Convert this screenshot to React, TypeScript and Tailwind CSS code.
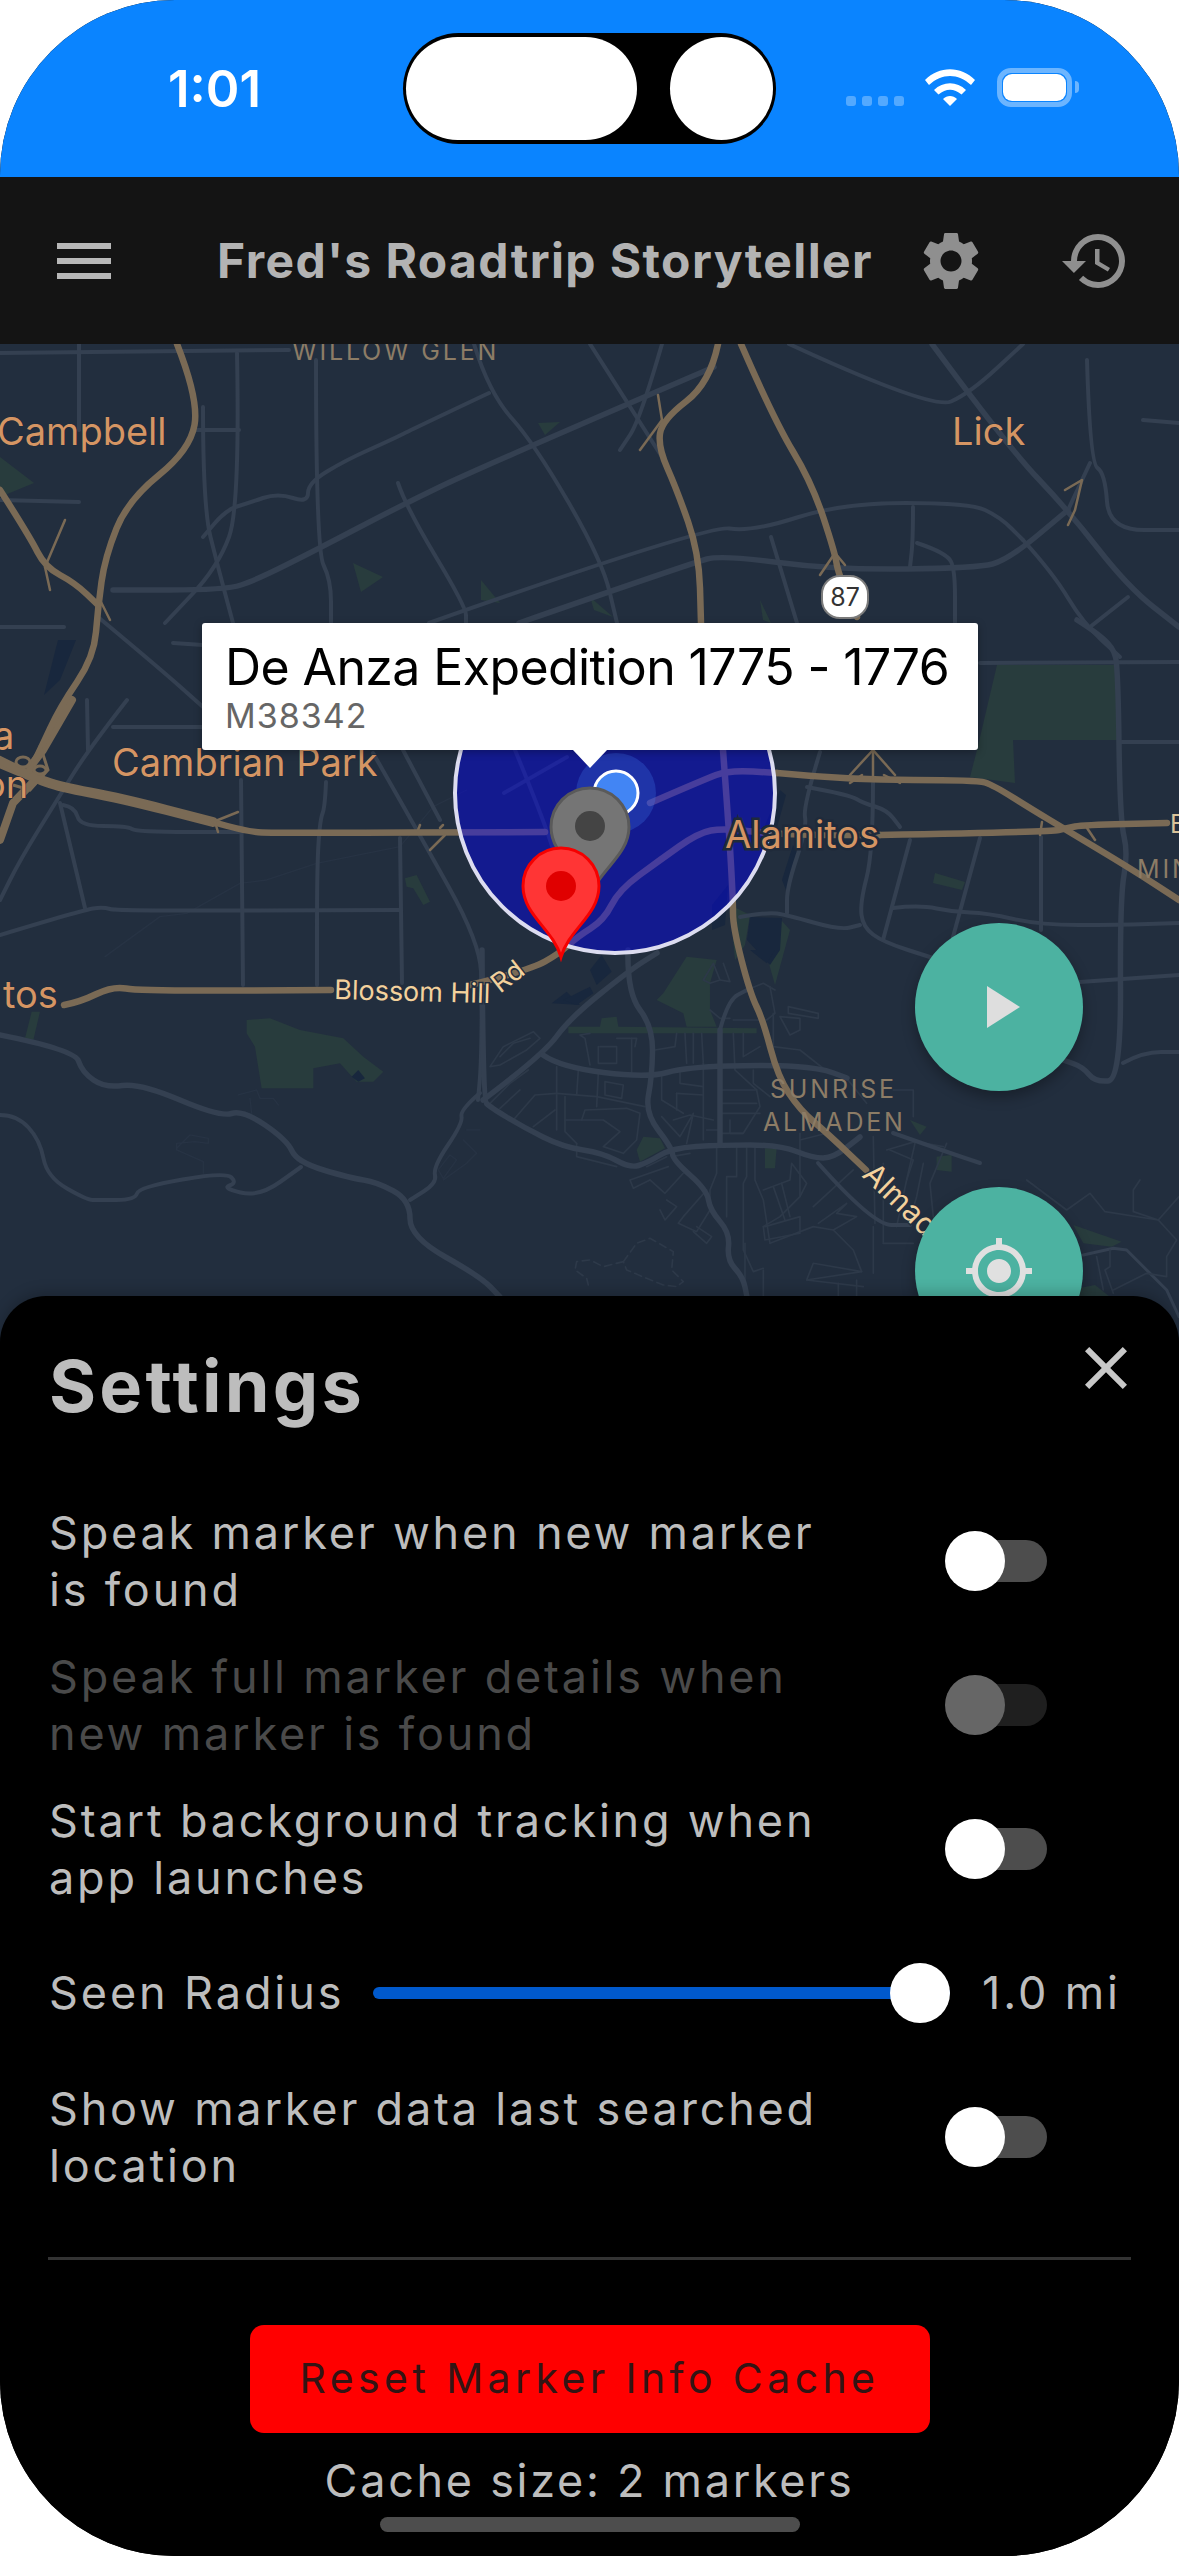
import React from "react";
import { MdMenu, MdSettings, MdHistory, MdClose, MdPlayArrow, MdGpsFixed } from "react-icons/md";

const HWY = "#7a6a55";
const ART = "#344051";
const MIN = "#2d3949";
const PARK = "#283c3d";

function smoothPath(p: string) {
  const pts = p.trim().split(/\s+/).map((s) => s.split(",").map(Number));
  let d = `M${pts[0][0]} ${pts[0][1]}`;
  for (let i = 1; i < pts.length - 1; i++) {
    const mx = (pts[i][0] + pts[i + 1][0]) / 2;
    const my = (pts[i][1] + pts[i + 1][1]) / 2;
    d += `Q${pts[i][0]} ${pts[i][1]} ${mx} ${my}`;
  }
  const last = pts[pts.length - 1];
  return d + `L${last[0]} ${last[1]}`;
}

function Lines({ items, color, width, dash, smooth }: { items: string[]; color: string; width: number; dash?: string; smooth?: boolean }) {
  return (
    <g fill="none" stroke={color} strokeWidth={width} strokeLinejoin="round" strokeLinecap="round" strokeDasharray={dash}>
      {items.map((p, i) => (smooth ? <path key={i} d={smoothPath(p)} /> : <polyline key={i} points={p} />))}
    </g>
  );
}

function Polys({ items, color }: { items: string[]; color: string }) {
  return (
    <g fill={color}>
      {items.map((p, i) => (
        <polygon key={i} points={p} />
      ))}
    </g>
  );
}

const parks = [
  "997,665 1117,665 1117,740 1013,740 1015,783 970,777 977,750",
  "935,873 965,882 962,890 933,883",
  "538,423 560,422 545,435",
  "353,563 383,577 361,592",
  "481,580 500,603 481,600",
  "590,597 613,617 594,610",
  "760,600 771,623 763,620",
  "0,457 34,483 0,497",
  "730,905 750,915 745,945 735,960",
  "781,920 790,930 775,985 768,960",
  "1070,1290 1095,1285 1120,1305 1080,1300",
];
const water = [
  "747,940 750,917 782,918 780,950 770,965",
  "58,640 76,640 60,680 44,695",
  "763,830 780,790 786,795 772,845",
  "782,880 793,845 797,852 788,895",
  "712,905 728,885 725,925 712,930",
];
const highways = [
  "741,344 774,420 812,483 835,553 838,573 857,617",
  "723,750 729,830 733,900 733,927 750,993 763,1020 778,1077 800,1110 827,1133 866,1170",
  "718,344 710,383 662,420 658,447 677,490 699,553 701,623",
  "177,344 199,400 190,450 128,500 105,557 98,607 94,657 60,707 40,750 30,770",
  "0,490 30,537 45,567 75,583 98,605",
  "777,773 850,780 977,780 993,785 1033,810 1063,828 1133,870 1179,900",
  "880,835 1050,832 1067,828 1083,825 1167,823",
  "213,822 247,832 277,833 545,832",
  "650,803 703,780 729,770 777,773",
  "64,1005 80,1002 113,986 139,991 331,990",
  "470,985 530,970 560,953 577,937 604,920 619,890 660,860 698,833 724,828 780,835 880,835",
];
const majorArterials = [
  "519,623 692,563 722,555 835,570 977,568 1008,560 1068,510",
  "714,367 481,467 398,507 316,550 256,580 226,590 113,590",
  "0,1035 75,1050 82,1072 105,1088 140,1083 220,1117 243,1110 287,1140 297,1162 350,1178 377,1182 410,1200 410,1237 481,1277 500,1297",
  "482,950 483,1100 490,1107 523,1127 563,1147 603,1153 630,1168 647,1163 672,1148 720,1145 780,1145 813,1158 833,1158 860,1137",
  "483,1100 543,1055 570,1018 630,970 657,953",
  "543,1055 560,1067 647,1078 687,1067 770,1065 820,1068 847,1078",
  "628,950 627,993 653,1027 652,1077 645,1113 672,1148 673,1160 707,1190 710,1210 730,1233 727,1260 743,1277 747,1297",
  "720,1030 720,1145",
  "932,344 1008,447 1068,510 1128,587 1179,627",
  "1077,620 1093,630 1113,647 1118,667 1120,820 1128,853 1120,897 1121,1080 1095,1082 1083,1067 1063,1060",
];
const arterials = [
  "0,353 289,350",
  "474,344 489,393 534,443 602,560 617,623",
  "398,483 406,507 466,607 466,623",
  "429,623 707,525 752,532 842,503 970,503 1000,517 1023,540",
  "489,393 417,427 391,440 346,460 308,483 308,503 278,493 248,503 226,510 203,537",
  "79,344 79,430",
  "203,407 203,507 218,567 233,623",
  "237,353 240,507 218,567 165,623",
  "195,430 239,430",
  "0,500 79,502",
  "316,360 316,550 331,580 331,623",
  "98,617 158,667 203,707",
  "0,627 64,627",
  "173,643 203,645",
  "113,727 203,727",
  "127,700 88,750 57,800 20,860 0,900",
  "87,700 88,750",
  "60,803 85,908",
  "63,805 75,807 80,826 127,826 137,832 240,832",
  "0,935 83,910 103,907 117,911 400,910",
  "241,780 243,985",
  "326,782 325,807 320,820 317,867 317,985",
  "400,838 402,983",
  "373,753 417,830 480,943 482,1000 481,1067 478,1100",
  "403,750 440,820",
  "0,1115 17,1115 40,1140 47,1177 87,1200 98,1200 135,1200 139,1187 226,1172 237,1183 222,1188 259,1197 301,1167",
  "480,1093 460,1110 463,1123 433,1167 437,1183 410,1200",
  "720,1030 728,1000 747,990",
  "818,1163 873,1225 910,1225",
  "893,1133 947,1152 980,1163",
  "807,787 850,795 863,803 887,810 900,827",
  "873,783 873,853 860,903 863,927 883,942 933,958",
  "740,917 767,912 787,915 840,930 860,925",
  "910,840 883,940",
  "980,838 953,937",
  "893,908 920,905 953,912 987,913 1040,925 1117,925 1179,923",
  "1041,837 1041,930",
  "980,663 1179,662",
  "1120,742 1179,742",
  "1080,982 1179,975",
  "1123,1063 1143,1052 1179,1052",
  "820,752 803,807 807,827 787,887 787,913",
  "789,344 932,410 970,393 1023,344",
  "1087,360 1090,463 1105,473 1109,530 1179,530",
  "1143,420 1179,423",
  "913,507 913,540 910,567",
  "917,543 947,553 955,570 955,623",
  "1023,540 1053,573 1083,623 1120,657",
  "1128,597 1090,627",
  "771,537 797,623",
  "662,344 640,420 620,450",
  "515,750 541,813 560,870",
  "504,793 567,757",
  "590,344 662,457",
  "1090,463 1068,510",
];
const minors11 = [
  "30,350 70,290 160,245 180,265 140,300 60,345 30,350", "60,320 100,280 150,265",
  "230,350 230,540", "295,360 290,435", "255,440 255,545 290,580", "350,470 355,370",
  "375,395 430,405 425,445 375,435 375,395", "455,265 455,370", "360,290 410,290 410,340 355,340 355,290",
  "410,265 470,265 465,290", "330,250 300,255 315,265 330,345", "30,460 90,400 145,360", "60,475 120,420",
  "100,510 165,435 230,430", "160,530 225,480", "230,430 350,440 495,470", "305,510 315,480 440,475 480,490 470,570 430,610",
  "255,510 370,510 420,545 370,590 430,610", "290,580 290,620 410,650", "525,300 585,290 590,250", "615,250 620,340",
  "640,250 640,340", "665,250 670,340", "545,380 545,450 610,490", "600,365 600,400 670,410", "590,430 670,435",
  "590,430 590,480", "670,340 670,570", "545,500 600,560 640,490 620,580", "580,510 630,495 700,510", "680,540 720,540",
  "720,420 830,420 840,470 790,550 720,550", "725,460 830,460", "725,490 840,490", "750,510 750,550 790,550",
  "820,360 820,400 870,440", "760,250 765,360 830,420", "790,250 790,320 840,290", "900,200 960,205 960,240 930,255 900,200",
  "925,170 1015,190 1015,205 925,190 925,170", "880,190 880,290 960,300 1030,355 1100,385", "960,550 960,740 900,800 850,830",
  "1040,550 960,570", "1100,385 1160,460", "1240,420 1300,420 1300,500", "1180,560 1185,820", "1210,640 1210,880",
  "1230,600 1300,630 1280,690 1250,830", "1305,580 1280,690", "1330,640 1310,740 1290,810", "1400,580 1350,700 1360,800",
  "1220,600 1305,575 1390,590", "575,620 630,610", "610,670 555,730 510,690", "565,650 450,690 460,715 510,690", "500,650 560,620",
  "680,720 610,800 595,820 650,845 690,780", "650,830 695,860 680,880 640,845", "560,750 590,770 555,810 540,780",
  "710,590 710,670 690,720 690,780", "770,590 770,680 740,680 740,800", "800,590 800,680 790,700 790,900 820,965 850,955",
  "825,590 825,690 850,750 870,880", "850,720 930,690 935,640 980,700 960,740", "880,710 915,810", "905,700 930,800",
  "855,830 960,800 960,850 855,870 850,830", "870,880 1000,830 1060,840 1120,900 1145,965", "1060,840 1130,800 1070,790 1100,760 1015,820",
  "1000,770 1120,660", "1000,940 1145,965 980,990 1000,940", "980,990 1150,1010", "1180,830 1180,970", "1210,880 1300,880",
  "1130,990 1130,1040", "1075,1000 1075,1040", "850,960 850,1040", "795,880 795,1040",
  "690,100 720,90 700,40 670,90 690,100", "720,90 750,95 730,40", "690,180 720,205 750,205",
  "885,120 850,100 800,120", "870,110 885,190 860,210 760,210",
];

function MapDrawing() {
  return (
    <svg className="absolute inset-0 block" width={1179} height={1012} viewBox="0 344 1179 1012">
      <rect x={0} y={344} width={1179} height={1012} fill="#222e3e" />
      <Polys items={parks} color={PARK} />
      <Polys items={water} color="#18273d" />
      <g transform="translate(480 950) scale(0.3333)">
        <Polys
          items={[
            "550,130 620,20 710,30 690,100 690,180 710,230 620,230 610,190 530,150",
            "265,230 360,230 365,205 410,200 415,230 830,235 830,250 265,250",
            "470,600 490,560 540,565 555,595 480,635",
            "855,595 890,595 885,655 855,655",
            "1290,510 1340,530 1320,555",
            "1370,620 1415,615 1415,665 1370,660",
          ]}
          color={PARK}
        />
        <Polys
          items={["215,160 260,125 300,165", "330,60 365,15 395,65 350,105", "250,150 330,110 340,130 290,165", "810,0 885,0 860,40"]}
          color="#18273d"
        />
        <Lines items={minors11} color={MIN} width={5} />
        <Lines
          items={["430,935 470,880 510,865 580,905 575,960 610,995 590,1010 550,1005 500,985 440,960 430,935", "430,935 370,950 330,930 290,935 285,960 320,985 325,1005"]}
          color={MIN}
          width={5}
          dash="22 14"
        />
      </g>
      <g transform="translate(0 700) scale(0.3333)">
        <Polys
          items={[
            "740,960 810,955 900,990 1030,1015 1090,1070 1150,1115 1120,1145 1070,1145 1020,1090 940,1105 940,1165 785,1165 765,1040 740,1000",
            "1215,535 1250,525 1290,605 1270,615 1240,565 1220,560",
            "95,935 120,935 100,1020 75,1015",
          ]}
          color={PARK}
        />
        <Polys items={["1055,1130 1075,1110 1095,1135 1075,1145"]} color="#18273d" />
        <Lines
          items={[
            "715,1185 770,1170 780,1195 820,1195 835,1215",
            "750,1195 755,1240",
            "530,1345 570,1305 625,1315 625,1330 585,1325 530,1330 530,1350 610,1385 610,1420",
            "1315,1410 1350,1365 1370,1380 1330,1435 1315,1410",
            "1400,1290 1440,1290",
            "1390,1320 1430,1360 1400,1390 1330,1440",
            "315,770 480,650 560,640 720,550 800,540 950,490 1200,440 1300,320 1400,270",
          ]}
          color="#273344"
          width={4}
        />
      </g>
      <g transform="translate(900 1180) scale(0.3333)">
        <Polys items={["520,135 665,185 635,200 550,190"]} color={PARK} />
        <Lines items={["550,225 640,205 680,210 740,270 800,330 837,410"]} color={ART} width={9} />
        <Lines
          items={["380,0 500,90 570,40 615,95 775,120 700,95 700,30 720,0", "775,120 830,180 800,230 800,290 740,280 640,330", "775,120 837,50", "590,230 610,330", "630,210 630,260 615,270 640,340"]}
          color={MIN}
          width={5}
        />
      </g>
      <Lines items={arterials} color={ART} width={4} smooth />
      <Lines items={majorArterials} color={ART} width={5.5} smooth />
      <Lines items={["0,763 33,777 60,787 120,798 213,822"]} color={HWY} width={10} smooth />
      <Lines items={["0,840 13,803 37,778", "72,700 43,750 30,767", "0,760 40,780"]} color={HWY} width={8} />
      <Lines items={highways} color={HWY} width={6.5} smooth />
      <Lines
        items={[
          "45,567 65,520", "45,567 50,590", "100,600 110,620", "662,420 658,395", "662,420 640,450",
          "873,750 850,775", "873,750 895,775", "873,750 873,780", "862,775 850,783", "884,775 900,783",
          "213,822 238,812", "215,822 218,832", "420,825 418,830", "440,828 443,825", "445,835 430,850",
          "1042,822 1040,835", "1085,825 1095,840", "1048,820 1062,826", "835,553 845,565", "835,553 820,575",
          "1065,490 1082,480 1075,510 1068,525",
        ]}
        color={HWY}
        width={2.5}
      />
      <g fill="none" stroke={HWY} strokeWidth={3}>
        <ellipse cx={23} cy={762} rx={7} ry={5} />
        <ellipse cx={40} cy={770} rx={6} ry={4} />
        <polyline points="13,785 30,790 48,770 40,745" />
      </g>
      <circle cx={615} cy={793} r={160} fill="#0000ff" fillOpacity={0.42} stroke="#dcdcf0" strokeWidth={4} />
      <g fontFamily="Inter, sans-serif">
        <g fill="#d59563" fontSize={38} stroke="#1f2a3a" strokeWidth={1} paintOrder="stroke">
          <text x={-3} y={445}>Campbell</text>
          <text x={952} y={445}>Lick</text>
          <text x={112} y={776}>Cambrian Park</text>
          <text x={-7} y={749}>a</text>
          <text x={-17} y={798}>on</text>
          <text x={725} y={848} stroke="#1f2a3a" strokeWidth={5}>Alamitos</text>
          <text x={3} y={1008}>tos</text>
        </g>
        <g fill="#8c7c66" fontSize={25} letterSpacing={2.8}>
          <text x={292} y={360}>WILLOW GLEN</text>
          <text x={770} y={1098}>SUNRISE</text>
          <text x={763} y={1131}>ALMADEN</text>
          <text x={1137} y={878}>MIN</text>
        </g>
        <text x={1170} y={833} fill="#d9c39a" fontSize={25}>E</text>
        <g fill="#f3d19c" fontSize={27} stroke="#222e3e" strokeWidth={3} paintOrder="stroke">
          <text x={334} y={999} transform="rotate(1.5 334 999)">Blossom Hill</text>
          <text x={500} y={994} transform="rotate(-38 500 994)">Rd</text>
          <text x={861} y={1176} transform="rotate(44 861 1176)" fontSize={30}>Almad</text>
        </g>
      </g>
      <rect x={822} y={576} width={46} height={42} rx={18} fill="#fff" stroke="#7c7c7c" strokeWidth={2} />
      <text x={845} y={606} textAnchor="middle" fontFamily="Inter, sans-serif" fontSize={25} fill="#333">87</text>
      <circle cx={616} cy={793} r={40} fill="#4285f4" fillOpacity={0.25} />
      <circle cx={616} cy={793} r={22} fill="#4285f4" stroke="#fff" strokeWidth={3} />
      <path d="M590 898 C582 870 551 856 551 827 A39 39 0 0 1 629 827 C629 856 598 870 590 898 Z" fill="#757575" stroke="#5a5a5a" strokeWidth={3} />
      <circle cx={590} cy={826} r={15} fill="#444" />
      <path d="M561 957 C553 929 523 915 523 886 A38 38 0 0 1 599 886 C599 915 569 929 561 957 Z" fill="#ff3535" stroke="#f50000" strokeWidth={3} />
      <circle cx={561} cy={886} r={15} fill="#e00000" />
    </svg>
  );
}

function Toggle({ disabled }: { disabled?: boolean }) {
  return (
    <div className="relative w-[102px] h-[60px] shrink-0">
      <div className={`absolute right-0 top-[9px] w-[82px] h-[42px] rounded-full ${disabled ? "bg-[#1f1f1f]" : "bg-[#4d4d4d]"}`} />
      <div className={`absolute left-0 top-0 w-[60px] h-[60px] rounded-full ${disabled ? "bg-[#666666]" : "bg-white"}`} />
    </div>
  );
}

function Row({ lines, disabled }: { lines: [string, string]; disabled?: boolean }) {
  return (
    <div className="flex items-center h-[114px]">
      <div className={`-ml-[1px] w-[896px] whitespace-nowrap text-[45px] leading-[57px] tracking-[2.8px] ${disabled ? "text-[#4a4a4a]" : "text-[#bdbdbd]"}`}>
        {lines[0]}
        <br />
        {lines[1]}
      </div>
      <Toggle disabled={disabled} />
    </div>
  );
}

export default function App() {
  return (
    <div className="w-[1179px] h-[2556px] bg-white font-[Inter,sans-serif]">
      <div className="w-full h-full rounded-[175px] overflow-hidden bg-black flex flex-col">
        <div className="h-[177px] shrink-0 bg-[#0a84ff] flex items-start pt-[33px] pl-[168px]">
          <div className="w-[235px] h-[111px] flex items-center text-white text-[51px] font-semibold mt-[1px]">1:01</div>
          <div className="w-[373px] h-[111px] rounded-full bg-black flex justify-between items-center px-[3px]">
            <div className="w-[231px] h-[103px] rounded-full bg-white" />
            <div className="w-[103px] h-[103px] rounded-full bg-white" />
          </div>
          <div className="flex items-end ml-[70px] h-[73px]">
            <div className="flex gap-[6px]">
              <div className="w-[10px] h-[10px] rounded-[3px] bg-white/30" />
              <div className="w-[10px] h-[10px] rounded-[3px] bg-white/30" />
              <div className="w-[10px] h-[10px] rounded-[3px] bg-white/30" />
              <div className="w-[10px] h-[10px] rounded-[3px] bg-white/30" />
            </div>
            <svg width={50} height={37} viewBox="0 0 50 37" className="ml-[21px] block" fill="#fff">
              <path d="M0 11 C14 -3.5 36 -3.5 50 11 L46 16 C33 4 17 4 4 16 Z" />
              <path d="M9 21 C18 12 32 12 41 21 L36.5 25.5 C29 19 21 19 13.5 25.5 Z" />
              <path d="M18 30 C22 26 28 26 32 30 L25 37 Z" />
            </svg>
            <div className="ml-[22px] w-[75px] h-[39px] rounded-[14px] border-[5px] border-white/40 flex items-center justify-center -mb-[1px]">
              <div className="w-[63px] h-[27px] rounded-[9px] bg-white shrink-0" />
            </div>
            <div className="w-[4px] h-[12px] ml-[3px] mb-[13px] rounded-r-full bg-white/40" />
          </div>
        </div>

        <div className="h-[167px] shrink-0 bg-[#141414] flex items-center relative z-10">
          <MdMenu size={72} color="#b8b8b8" className="ml-[48px] shrink-0" />
          <div className="ml-[97px] w-[699px] whitespace-nowrap text-[48px] font-bold tracking-[1.4px] text-[#b3b3b3]">Fred's Roadtrip Storyteller</div>
          <MdSettings size={70} color="#8f8f8f" className="shrink-0" />
          <MdHistory size={72} color="#8f8f8f" className="ml-[73px] shrink-0" />
        </div>

        <div className="relative h-[1012px] shrink-0 overflow-hidden">
          <MapDrawing />
          <div className="absolute left-[202px] top-[279px] w-[776px] h-[127px] bg-white rounded-[3px] shadow-[0_2px_8px_rgba(0,0,0,0.3)] pl-[23px] pt-[14px]">
            <div className="text-[50px] leading-[60px] tracking-[-0.6px] text-black whitespace-nowrap">De Anza Expedition 1775 - 1776</div>
            <div className="text-[34px] leading-[38px] text-[#666666] tracking-[1px]">M38342</div>
            <div className="absolute left-[371px] top-[127px] w-0 h-0 border-l-[17px] border-r-[17px] border-t-[18px] border-l-transparent border-r-transparent border-t-white" />
          </div>
          <div className="absolute left-[915px] top-[579px] w-[168px] h-[168px] rounded-full bg-[#4cb2a1] shadow-[0_6px_14px_rgba(0,0,0,0.3)] flex items-center justify-center">
            <MdPlayArrow size={72} color="#dedede" />
          </div>
          <div className="absolute left-[915px] top-[843px] w-[168px] h-[168px] rounded-full bg-[#4cb2a1] shadow-[0_6px_14px_rgba(0,0,0,0.3)] flex items-center justify-center">
            <MdGpsFixed size={72} color="#e0e0e0" />
          </div>
        </div>

        <div className="relative z-10 -mt-[60px] h-[1260px] shrink-0 bg-black rounded-t-[46px] flex flex-col shadow-[0_-4px_14px_rgba(0,0,0,0.2)]">
          <div className="flex justify-between items-start pl-[49px] pr-[37px] pt-[36px] h-[208px] shrink-0">
            <div className="mt-[11px] text-[72px] leading-[86px] font-bold tracking-[3.2px] text-[#bdbdbd]">Settings</div>
            <MdClose size={72} color="#c8c8c8" />
          </div>
          <div className="px-[50px] flex flex-col gap-[30px]">
            <Row lines={["Speak marker when new marker", "is found"]} />
            <Row lines={["Speak full marker details when", "new marker is found"]} disabled />
            <Row lines={["Start background tracking when", "app launches"]} />
            <div className="flex items-center h-[114px] text-[45px] tracking-[2.9px] text-[#bdbdbd]">
              <div className="-ml-[1px] w-[324px] whitespace-nowrap">Seen Radius</div>
              <div className="relative w-[577px] h-[12px] rounded-full bg-[#0059cc]">
                <div className="absolute right-0 -top-[24px] w-[60px] h-[60px] rounded-full bg-white" />
              </div>
              <div className="ml-[32px] whitespace-nowrap">1.0 mi</div>
            </div>
            <Row lines={["Show marker data last searched", "location"]} />
          </div>
          <div className="mx-[48px] mt-[63px] h-[3px] bg-[#333333] shrink-0" />
          <div className="mx-auto mt-[65px] w-[680px] h-[108px] rounded-[14px] bg-[#ff0000] flex items-center justify-center text-[#331414] text-[41px] tracking-[4.4px] whitespace-nowrap shrink-0">Reset Marker Info Cache</div>
          <div className="mt-[19px] h-[57px] leading-[57px] text-center text-[45px] tracking-[2.7px] text-[#bdbdbd] shrink-0">Cache size: 2 markers</div>
          <div className="mx-auto mt-[8px] w-[420px] h-[15px] rounded-full bg-[#4d4d4d] shrink-0" />
        </div>
      </div>
    </div>
  );
}
